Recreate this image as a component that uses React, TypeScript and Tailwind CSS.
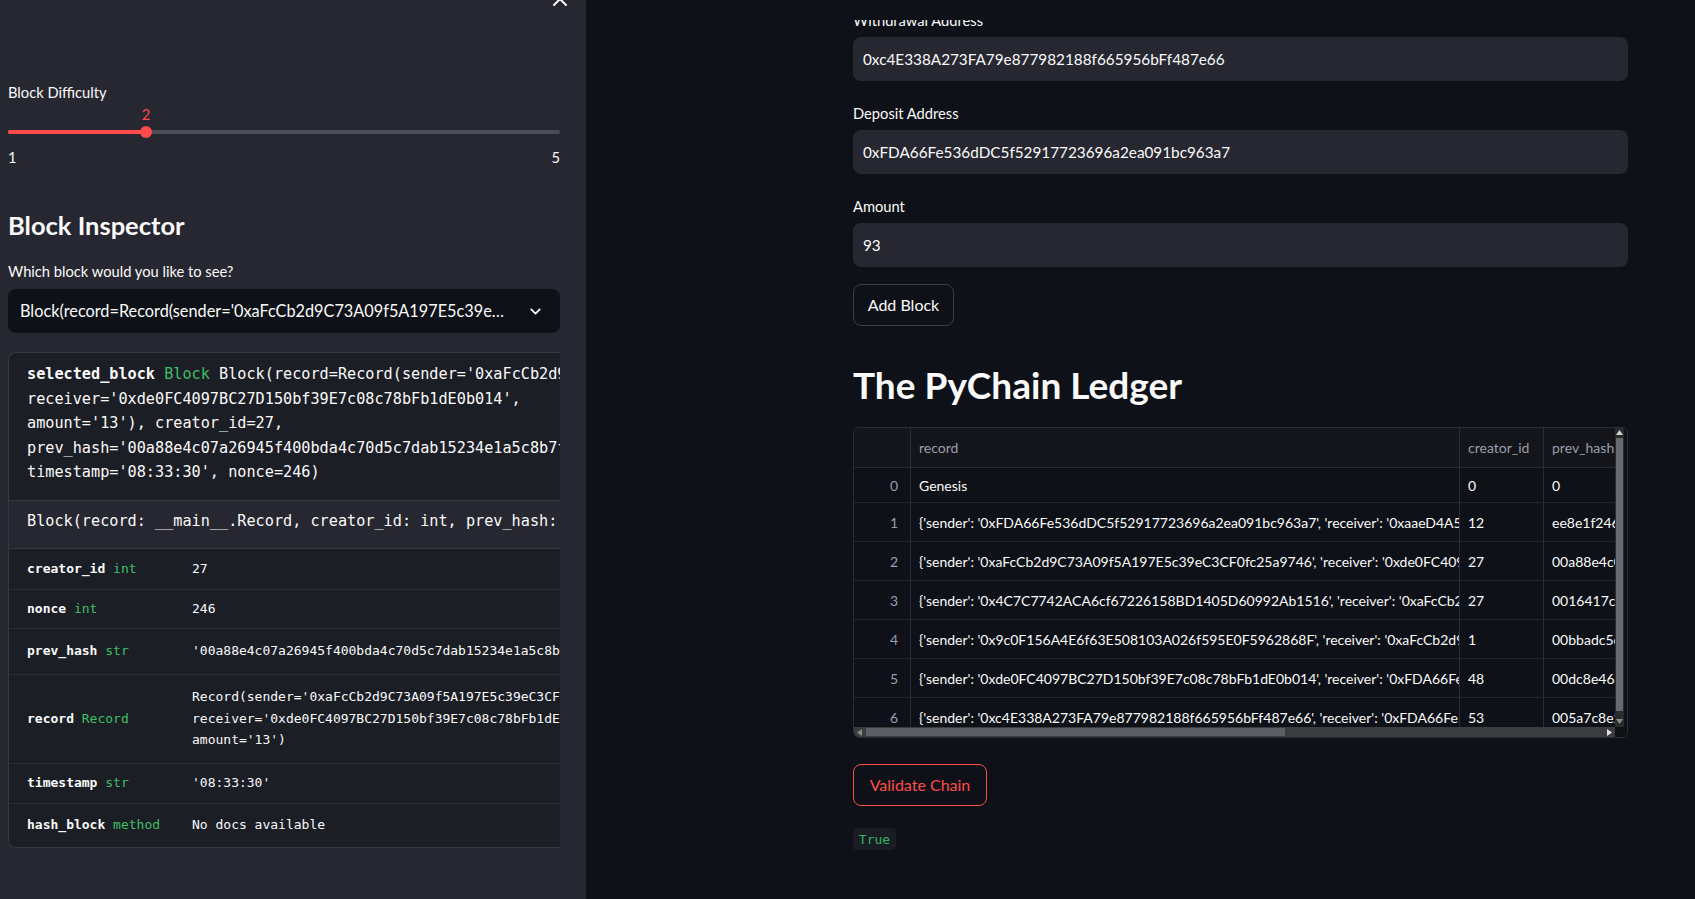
import { ChevronDown } from 'lucide-react';

const mono = "font-['DejaVu_Sans_Mono',monospace]";

const members = [
  { name: 'creator_id', type: 'int', h: 'h-[40px]', value: ['27'] },
  { name: 'nonce', type: 'int', h: 'h-[39px]', value: ['246'] },
  {
    name: 'prev_hash',
    type: 'str',
    h: 'h-[46px]',
    value: ["'00a88e4c07a26945f400bda4c70d5c7dab15234e1a5c8b7f3d21c6a9e04b'"],
  },
  {
    name: 'record',
    type: 'Record',
    h: 'h-[89px]',
    value: [
      "Record(sender='0xaFcCb2d9C73A09f5A197E5c39eC3CF0fc25a9746',",
      "receiver='0xde0FC4097BC27D150bf39E7c08c78bFb1dE0b014',",
      "amount='13')",
    ],
  },
  { name: 'timestamp', type: 'str', h: 'h-[40px]', value: ["'08:33:30'"] },
  { name: 'hash_block', type: 'method', h: 'h-[44px]', value: ['No docs available'] },
];

const ledger = [
  { rec: 'Genesis', cid: '0', ph: '0', h: 'h-[35px]' },
  {
    rec: "{'sender': '0xFDA66Fe536dDC5f52917723696a2ea091bc963a7', 'receiver': '0xaaeD4A5E17B1b0d6a8C3c2E94F8eD0f8b6aB2c31', 'amount': '25'}",
    cid: '12',
    ph: 'ee8e1f2460a9c3b71d',
    h: 'h-[39px]',
  },
  {
    rec: "{'sender': '0xaFcCb2d9C73A09f5A197E5c39eC3CF0fc25a9746', 'receiver': '0xde0FC4097BC27D150bf39E7c08c78bFb1dE0b014', 'amount': '13'}",
    cid: '27',
    ph: '00a88e4c07a26945f4',
    h: 'h-[39px]',
  },
  {
    rec: "{'sender': '0x4C7C7742ACA6cf67226158BD1405D60992Ab1516', 'receiver': '0xaFcCb2d9C73A09f5A197E5c39eC3CF0fc25a9746', 'amount': '40'}",
    cid: '27',
    ph: '0016417ce2b9a01f55',
    h: 'h-[39px]',
  },
  {
    rec: "{'sender': '0x9c0F156A4E6f63E508103A026f595E0F5962868F', 'receiver': '0xaFcCb2d9C73A09f5A197E5c39eC3CF0fc25a9746', 'amount': '7'}",
    cid: '1',
    ph: '00bbadc5e81f3c2a90',
    h: 'h-[39px]',
  },
  {
    rec: "{'sender': '0xde0FC4097BC27D150bf39E7c08c78bFb1dE0b014', 'receiver': '0xFDA66Fe536dDC5f52917723696a2ea091bc963a7', 'amount': '61'}",
    cid: '48',
    ph: '00dc8e462f7a9b0c13',
    h: 'h-[39px]',
  },
  {
    rec: "{'sender': '0xc4E338A273FA79e877982188f665956bFf487e66', 'receiver': '0xFDA66Fe536dDC5f52917723696a2ea091bc963a7', 'amount': '93'}",
    cid: '53',
    ph: '005a7c8e2d41f06b7e',
    h: 'h-[39px]',
  },
];

function Sidebar() {
  return (
    <aside className="relative w-[586px] shrink-0 overflow-hidden bg-[#262730] text-[#fafafa]">
      <svg className="absolute left-[553px] top-[-8px]" width="14" height="14" viewBox="0 0 14 14">
        <path d="M1 1L13 13M13 1L1 13" stroke="#fafafa" strokeWidth="2" strokeLinecap="round" />
      </svg>
      <div className="pl-2 pr-[26px] pt-[82px]">
        <div className="h-5 text-[14.7px] leading-5">Block Difficulty</div>

        <div className="relative mt-[2px] h-5">
          <span className="absolute left-[138px] -translate-x-1/2 text-[14.7px] leading-5 text-[#ff4b4b]">2</span>
        </div>
        <div className="relative mt-[2px] h-3">
          <div className="absolute inset-x-0 top-1 h-1 rounded bg-[#4b4d56]" />
          <div className="absolute left-0 top-1 h-1 w-[138px] rounded bg-[#ff4b4b]" />
          <div className="absolute left-[132px] top-0 h-3 w-3 rounded-full bg-[#ff4b4b]" />
        </div>
        <div className="mt-[9px] flex h-5 justify-between text-[14.7px] leading-5">
          <span>1</span>
          <span>5</span>
        </div>

        <h2 className="mt-[42px] text-[25.5px] font-bold leading-8">Block Inspector</h2>

        <div className="mt-[20px] h-5 text-[14.7px] leading-5">Which block would you like to see?</div>
        <div className="mt-[8px] flex h-[44px] items-center justify-between rounded-lg bg-[#0e1117] pl-3 pr-4 text-[16.3px]">
          <span className="overflow-hidden whitespace-nowrap">Block(record=Record(sender='0xaFcCb2d9C73A09f5A197E5c39e…</span>
          <ChevronDown size={17} strokeWidth={2.5} className="ml-2 shrink-0" />
        </div>

        <div className={`mt-[19px] overflow-hidden rounded-l-lg border-y border-l border-[#363842] bg-[#1c1e26] ${mono}`}>
          <div className="whitespace-pre px-[18px] pt-[9px] pb-[15px] text-[15.2px] leading-[24.5px]">
            <div>
              <b>selected_block</b> <span className="text-[#3dbf66]">Block</span> Block(record=Record(sender='0xaFcCb2d9C73A09f5A197E5c39eC3CF0fc25a9746',
            </div>
            <div>receiver='0xde0FC4097BC27D150bf39E7c08c78bFb1dE0b014',</div>
            <div>amount='13'), creator_id=27,</div>
            <div>prev_hash='00a88e4c07a26945f400bda4c70d5c7dab15234e1a5c8b7f3d21c6a9e04b',</div>
            <div>timestamp='08:33:30', nonce=246)</div>
          </div>
          <div className="flex h-[49px] items-center whitespace-pre border-y border-[#363842] bg-[#262730] px-[18px] pb-[6px] text-[15.2px]">
            Block(record: __main__.Record, creator_id: int, prev_hash: str, timestamp: str, nonce: int = 0)
          </div>
          {members.map((m, i) => (
            <div
              key={m.name}
              className={`flex items-center whitespace-pre px-[18px] text-[13px] leading-[21.5px] ${m.h} ${
                i > 0 ? 'border-t border-[#2b2d36]' : ''
              }`}
            >
              <div className="w-[165px] shrink-0">
                <b>{m.name}</b> <span className="text-[#3dbf66]">{m.type}</span>
              </div>
              <div>
                {m.value.map((v) => (
                  <div key={v}>{v}</div>
                ))}
              </div>
            </div>
          ))}
        </div>
      </div>
    </aside>
  );
}

function Field({ label, value, first }: { label: string; value: string; first?: boolean }) {
  return (
    <div className={first ? '' : 'mt-[22px]'}>
      <div className="h-5 text-[14.7px] leading-5">{label}</div>
      <div className="mt-[7px] flex h-[44px] items-center rounded-lg bg-[#262730] px-[10px] text-[15.3px]">{value}</div>
    </div>
  );
}

function Ledger() {
  const cols = 'grid grid-cols-[57px_549px_84px_200px]';
  return (
    <div className="mt-[20px] flex h-[311px] flex-col overflow-hidden rounded-md border border-[#2a2d36] text-[14px]">
      <div className="flex min-h-0 flex-1">
        <div className="min-w-0 flex-1 overflow-hidden">
          <div className={`${cols} h-[40px] border-b border-[#2a2d36] bg-[#13151b] text-[#9a9eab]`}>
            <div className="border-r border-[#2a2d36]" />
            <div className="flex items-center border-r border-[#2a2d36] px-2">record</div>
            <div className="flex items-center border-r border-[#2a2d36] px-2">creator_id</div>
            <div className="flex items-center whitespace-nowrap px-2">prev_hash</div>
          </div>
          {ledger.map((r, i) => (
            <div key={i} className={`${cols} ${r.h} border-b border-[#22252d]`}>
              <div className="flex items-center justify-end border-r border-[#2a2d36] pr-3 text-[#9a9eab]">{i}</div>
              <div className="overflow-hidden border-r border-[#2a2d36] px-2">
                <div className="flex h-full items-center whitespace-nowrap">{r.rec}</div>
              </div>
              <div className="flex items-center border-r border-[#2a2d36] px-2">{r.cid}</div>
              <div className="overflow-hidden px-2">
                <div className="flex h-full items-center whitespace-nowrap">{r.ph}</div>
              </div>
            </div>
          ))}
        </div>
        <div className="relative mr-[3px] w-[9px] shrink-0 bg-[#2b2b2e]">
          <svg className="absolute left-[1px] top-[2px]" width="7" height="5" viewBox="0 0 7 5">
            <path d="M0 5L3.5 0L7 5Z" fill="#d0d0d0" />
          </svg>
          <div className="absolute inset-x-[1px] top-[10px] bottom-[16px] bg-[#676970]" />
          <svg className="absolute bottom-[3px] left-[1px]" width="7" height="5" viewBox="0 0 7 5">
            <path d="M0 0L3.5 5L7 0Z" fill="#8a8a8a" />
          </svg>
        </div>
      </div>
      <div className="flex h-[10px] shrink-0">
        <div className="relative flex-1 bg-[#3b3c40]">
          <svg className="absolute left-[3px] top-[2px]" width="5" height="7" viewBox="0 0 5 7">
            <path d="M5 0L0 3.5L5 7Z" fill="#8a8a8a" />
          </svg>
          <div className="absolute inset-y-[1px] left-[12px] w-[419px] bg-[#5d5f66]" />
          <svg className="absolute right-[3px] top-[2px]" width="5" height="7" viewBox="0 0 5 7">
            <path d="M0 0L5 3.5L0 7Z" fill="#e0e0e0" />
          </svg>
        </div>
        <div className="w-[12px] bg-[#101114]" />
      </div>
    </div>
  );
}

export default function App() {
  return (
    <div className="flex h-[899px] w-[1695px] overflow-hidden font-[Lato,sans-serif] text-[#fafafa]">
      <Sidebar />
      <main className="relative flex-1 overflow-hidden bg-[#0e1117]">
        <div className="absolute inset-x-0 top-0 z-10 h-[20px] bg-[#0e1117]" />
        <div className="ml-[267px] w-[775px] pt-[10px]">
          <Field label="Withdrawal Address" value="0xc4E338A273FA79e877982188f665956bFf487e66" first />
          <Field label="Deposit Address" value="0xFDA66Fe536dDC5f52917723696a2ea091bc963a7" />
          <Field label="Amount" value="93" />

          <button className="mt-[17px] h-[42px] w-[101px] rounded-lg border border-[#3a3d47] text-[16px]">Add Block</button>

          <h1 className="mt-[37px] text-[37px] font-bold leading-[1.2]">The PyChain Ledger</h1>

          <Ledger />

          <button className="mt-[26px] h-[42px] w-[134px] rounded-lg border border-[#ff4b4b] text-[16px] text-[#ff4b4b]">
            Validate Chain
          </button>

          <div className={`mt-[22px] flex h-[22px] w-[43px] items-center justify-center rounded bg-[#1a1c23] text-[13px] text-[#2fb563] ${mono}`}>
            True
          </div>
        </div>
      </main>
    </div>
  );
}
